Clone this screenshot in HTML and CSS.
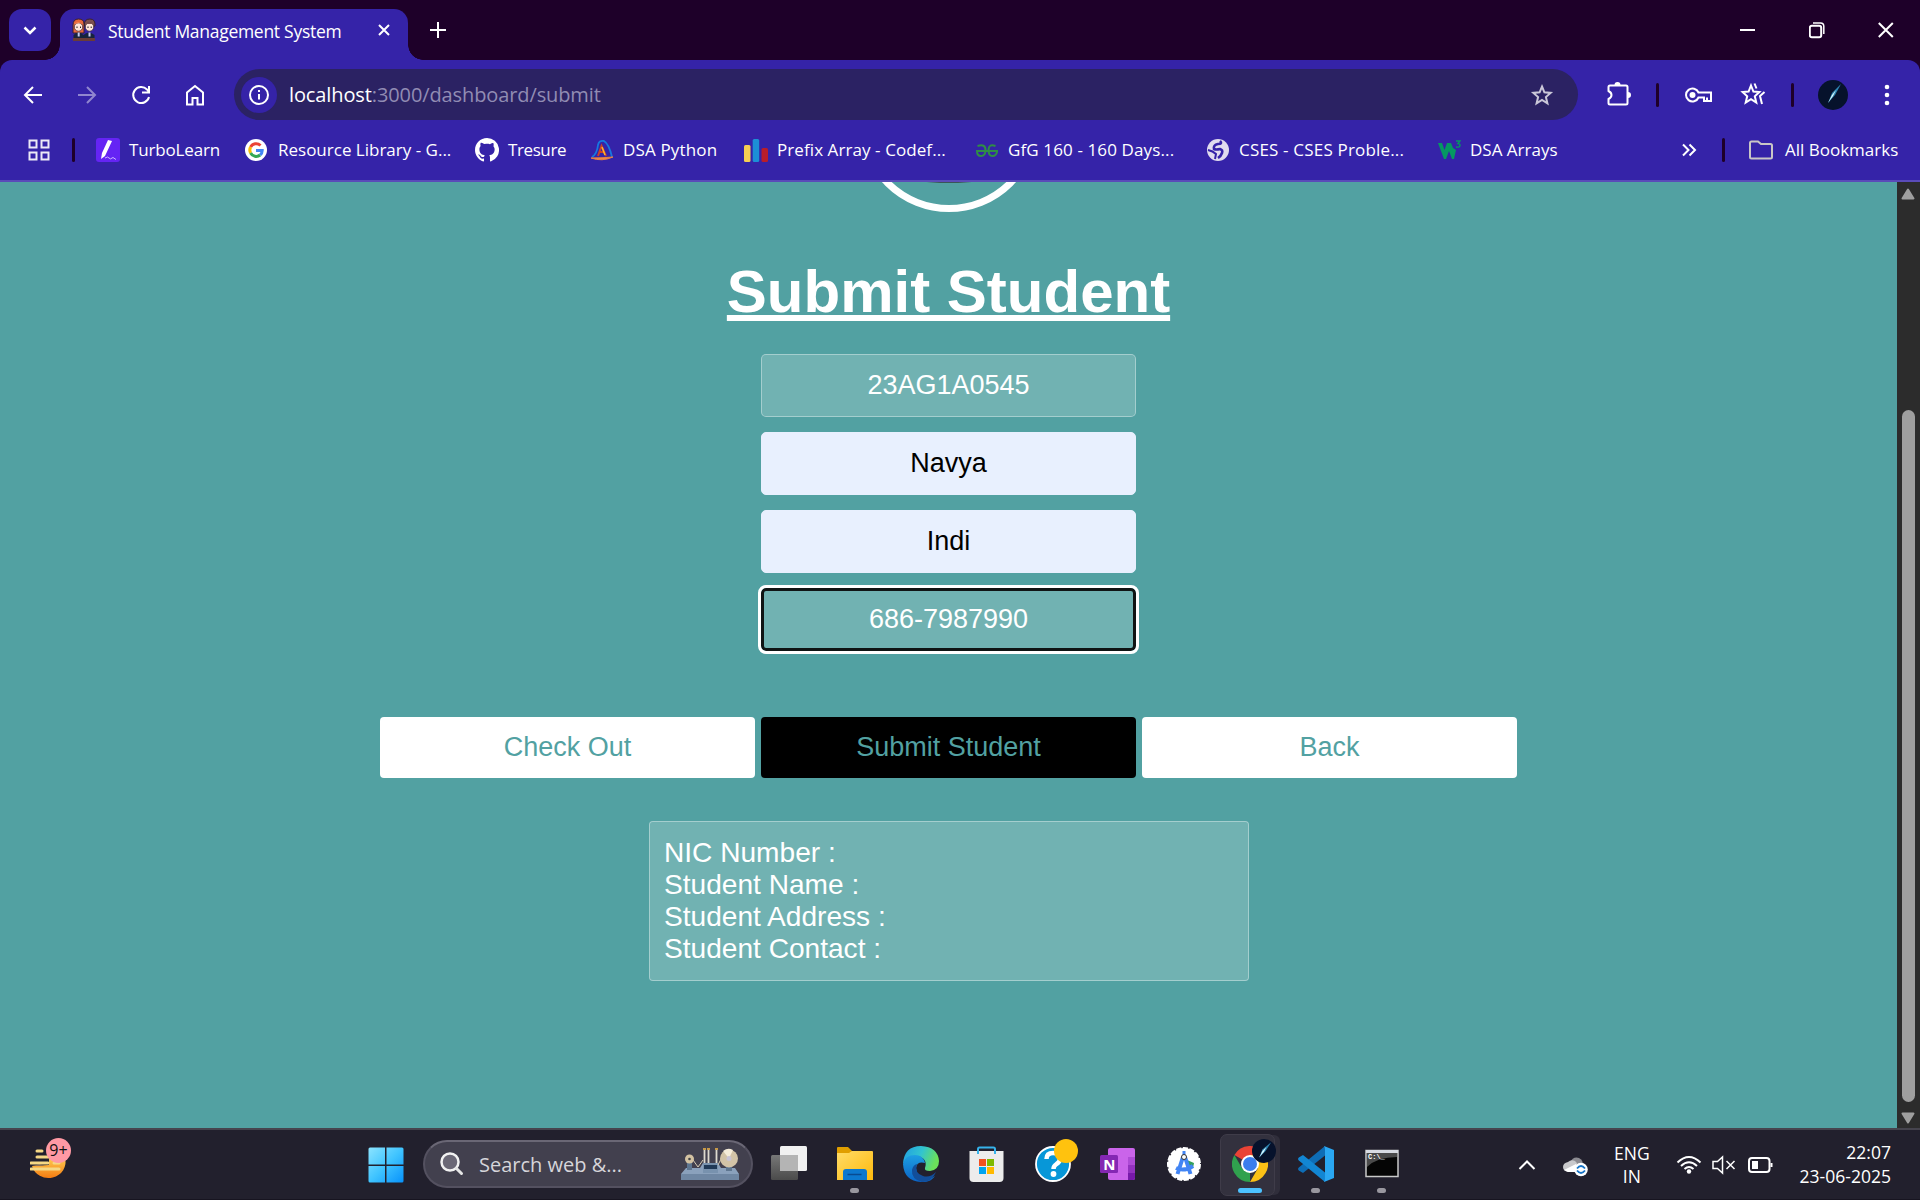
FILE: index.html
```html
<!DOCTYPE html>
<html lang="en">
<head>
<meta charset="utf-8">
<title>Student Management System</title>
<link rel="stylesheet" href="styles.css">
</head>
<body>
<header class="browser">
  <div class="tabstrip">
    <div class="tab-search"><svg width="42" height="42" viewBox="0 0 42 42"><path d="M15.500 18.500l5.500 5.500 5.500-5.500" class="ln w25"/></svg></div>
    <div class="tab">
      <svg class="favicon" width="24" height="24" viewBox="0 0 24 24"><path d="M1 15V7q0-6 5.500-6T12 6v9z" fill="#e7683c" stroke="#3a2230"/><path d="M12.500 8q-1-7 5.500-7 5.500 0 5 7z" fill="#7d5050" stroke="#3a2230"/><circle cx="6.500" cy="9" r="4.200" fill="#ffe6da" stroke="#3a2230" stroke-width=".7"/><circle cx="17.500" cy="9" r="4.200" fill="#ffe6da" stroke="#3a2230" stroke-width=".7"/><path d="M2.500 6q3-4 8 0l-3-1z" fill="#ff8650"/><path d="M13 6q3-3 9 0z" fill="#7d5050"/><path d="M1.500 20v-3q5-5 10 0 5-5 11 0v3z" fill="#17243c"/><path d="M5.700 14.500h2v4h-2zM16.500 14.500h2v4h-2z" fill="#c8cdf2"/><path d="M1 20h22v3H1z" fill="#6a3c37"/><path d="M5 8.500V10M8.500 8.500V10M16 8.500V10M19.200 8.500V10" stroke="#222"/></svg>
      <span class="tab-title">Student Management System</span>
      <svg class="tab-close" width="14" height="14" viewBox="0 0 14 14"><path d="M2 2l10 10M12 2L2 12" class="ln w2"/></svg>
    </div>
    <svg class="new-tab" width="20" height="20" viewBox="0 0 20 20"><path d="M10 2v16M2 10h16" class="ln w2"/></svg>
    <div class="window-controls">
      <svg width="16" height="18" viewBox="0 0 16 18"><path d="M0 9h15" class="ln w2"/></svg>
      <svg width="16" height="18" viewBox="0 0 16 18"><rect x=".8" y="4.800" width="11.400" height="11.400" rx="2" class="ln w2"/><path d="M4 2h7.500q3.300 0 3.300 3.300V13" class="ln w15"/></svg>
      <svg width="16" height="18" viewBox="0 0 16 18"><path d="M.8 2l14 14M14.800 2l-14 14" class="ln w2"/></svg>
    </div>
  </div>
  <div class="toolbar">
    <div class="nav">
      <svg width="24" height="24" viewBox="0 0 24 24"><path d="M21 12H4M12 4l-8 8 8 8" class="ln w2"/></svg>
      <svg class="dim" width="24" height="24" viewBox="0 0 24 24"><path d="M3 12h17M12 4l8 8-8 8" class="ln w2"/></svg>
      <svg width="24" height="24" viewBox="0 0 24 24"><path d="M20 14a8 8 0 1 1-2-7.500L20 9M20 3v6.500h-7" class="ln w2"/></svg>
      <svg width="24" height="24" viewBox="0 0 24 24"><path d="M4 21.500V9.500L12 3l8 6.500v12h-5.500V15h-5v6.500z" class="ln w2"/></svg>
    </div>
    <div class="omnibox">
      <span class="info"><svg width="22" height="22" viewBox="0 0 22 22"><circle cx="11" cy="11" r="9" class="ln w2"/><path d="M11 10v5.500M11 6v2" class="ln w2"/></svg></span>
      <span class="url">localhost<i>:3000/dashboard/submit</i></span>
      <svg class="star" width="24" height="24" viewBox="0 0 24 24"><path d="M12 3.500l2.400 5.800 6.300.6-4.800 4.200 1.500 6.200-5.400-3.300-5.400 3.300 1.500-6.200-4.800-4.200 6.300-.6z" class="ln w2"/></svg>
    </div>
    <div class="actions">
      <svg class="a-ext" width="26" height="26" viewBox="0 0 26 26"><path d="M2.500 6q0-1.500 1.500-1.500h16q1.500 0 1.500 1.500v16q0 1.500-1.500 1.500H4q-1.500 0-1.500-1.500V18q3-1.500 3-4t-3-4z" class="ln w2"/><path d="M8.500 4a3 3 0 0 1 6 0zM22 11a3 3 0 0 1 0 6z" fill="#fff"/></svg>
      <b class="sep a-sep1"></b>
      <svg class="a-key" width="28" height="20" viewBox="0 0 28 20"><path d="M13.500 7.500a6.500 6.500 0 1 0 0 5H19V16h7V7.500zM22 16v-3.500" class="ln w2"/><circle cx="7.500" cy="10" r="3" fill="#fff"/></svg>
      <svg class="a-stars" width="28" height="28" viewBox="0 0 28 28"><path d="M12 4.500l2.400 6 6 .6-4.600 4.200 1.500 6.300-5.300-3.400-5.300 3.400 1.500-6.300-4.600-4.200 6-.6zM15.500 2.500l2 5M25.500 11l-4.500 4 2 8" class="ln w2"/></svg>
      <b class="sep a-sep2"></b>
      <svg class="a-avatar" width="30" height="30" viewBox="0 0 30 30"><circle cx="15" cy="15" r="15" fill="#06122c"/><path d="M10 23L14 13 23 4 17 15z" fill="#2e86b4"/><path d="M10 23l4-8 4-5-3 6z" fill="#e6ffff"/></svg>
      <svg class="a-menu" width="6" height="24" viewBox="0 0 6 24"><g fill="#fff"><circle cx="3" cy="4" r="2.300"/><circle cx="3" cy="12" r="2.300"/><circle cx="3" cy="20" r="2.300"/></g></svg>
    </div>
  </div>
  <div class="bookmarks">
    <svg class="apps" width="24" height="24" viewBox="0 0 24 24"><path d="M2.500 2.500h7v7h-7zM14.500 2.500h7v7h-7zM2.500 14.500h7v7h-7zM14.500 14.500h7v7h-7z" class="ln w2"/></svg>
    <b class="sep b-sep1"></b>
    <div class="bm bm1"><svg width="24" height="24" viewBox="0 0 24 24"><rect width="24" height="24" rx="3" fill="#6524f4"/><path d="M12 2l4 1-7 15-4 3 1-6z" fill="#fff"/><path d="M9 20q3-2 4 0t4-.5l3 2" fill="none" stroke="#c9b4ff"/></svg><span>TurboLearn</span></div>
    <div class="bm bm2"><svg width="24" height="24" viewBox="0 0 24 24"><circle cx="12" cy="12" r="11" fill="#fff"/><g fill="none" stroke-width="3"><path d="M16.500 7.500A6.300 6.300 0 0 0 6.600 9" stroke="#ea4335"/><path d="M6.600 9a6.300 6.300 0 0 0 0 6" stroke="#fbbc05"/><path d="M6.600 15a6.300 6.300 0 0 0 9.600 2" stroke="#34a853"/><path d="M16.200 17a6.300 6.300 0 0 0 2-4.500H12" stroke="#4285f4"/></g></svg><span>Resource Library - G...</span></div>
    <div class="bm bm3"><svg width="24" height="24" viewBox="0 0 16 16"><path fill="#fff" d="M8 0C3.580 0 0 3.580 0 8c0 3.540 2.290 6.530 5.470 7.590.4.070.55-.17.55-.38v-1.490c-2.230.48-2.690-1.070-2.690-1.070-.36-.92-.89-1.170-.89-1.170-.73-.5.050-.49.050-.49.810.06 1.230.83 1.230.83.720 1.230 1.880.87 2.340.67.070-.52.280-.87.510-1.070-1.780-.2-3.640-.89-3.640-3.950 0-.87.310-1.590.82-2.150-.08-.2-.36-1.020.08-2.120 0 0 .67-.21 2.200.82A7.600 7.600 0 0 1 8 3.860c.68 0 1.360.09 2 .27 1.530-1.040 2.200-.82 2.200-.82.440 1.100.16 1.920.08 2.120.51.560.82 1.270.82 2.150 0 3.070-1.870 3.750-3.650 3.950.29.250.54.730.54 1.480v2.200c0 .21.150.46.550.38A8 8 0 0 0 8 0z"/></svg><span>Tresure</span></div>
    <div class="bm bm4"><svg width="24" height="24" viewBox="0 0 24 24"><path d="M2 19Q7 16 8 7q1-5 6-4 5 3 8 16" fill="none" stroke="#1678e0" stroke-width="1.800"/><path d="M1 20q11 4 22-1-11 1-22 1z" fill="#f48b42" stroke="#e68145"/><path d="M8 18l3.500-10L16 18M10 14h4" fill="none" stroke="#c8422a" stroke-width="2"/><path d="M12 9l3 8" stroke="#ffb42e" stroke-width="1.500"/></svg><span>DSA Python</span></div>
    <div class="bm bm5"><svg width="24" height="24" viewBox="0 0 24 24"><rect y="7" width="6.500" height="17" rx="1.500" fill="#f6ce52"/><rect x="8.700" y="1" width="6.500" height="23" rx="1.500" fill="#1c8fd6"/><rect x="17.500" y="10" width="6.500" height="14" rx="1.500" fill="#b91d2a"/></svg><span>Prefix Array - Codef...</span></div>
    <div class="bm bm6"><svg width="24" height="24" viewBox="0 0 24 24"><g fill="none" stroke="#2f8d46" stroke-width="2"><path d="M2.500 8q8-2.500 8 4 0 6-4.500 6-4 0-4-5H22v1q-1 4-4.500 4-4 0-4-6 0-6.500 7-4"/></g></svg><span>GfG 160 - 160 Days...</span></div>
    <div class="bm bm7"><svg width="24" height="24" viewBox="0 0 24 24"><circle cx="12" cy="12" r="11" fill="#e0dcee"/><path d="M14 3q3 3-2 3-5 1-4 5 2 1 6 0 3 1 2 4-1 3-4 5" fill="none" stroke="#3523a8" stroke-width="2.600"/><path d="M2 12q5 1 8 4l-1 5" fill="none" stroke="#3523a8" stroke-width="2"/></svg><span>CSES - CSES Proble...</span></div>
    <div class="bm bm8"><svg width="24" height="24" viewBox="0 0 24 24"><path d="M1 5h4l2.500 7L10 5h4l2 5 3 2-2 9h-2l-3-8-3 8H7z" fill="#059862"/><path d="M19 3h4l-2 2.500q2 0 2 2t-4 1.500" fill="none" stroke="#059862" stroke-width="1.400"/></svg><span>DSA Arrays</span></div>
    <svg class="more" width="16" height="14" viewBox="0 0 16 14"><path d="M2 1.500L7.500 7 2 12.500M8.500 1.500L14 7l-5.500 5.500" class="ln w2"/></svg>
    <b class="sep b-sep2"></b>
    <div class="bm bm9"><svg width="24" height="24" viewBox="0 0 24 24"><path d="M1 19V5q0-1.500 1.500-1.500H9L12 6h9.500Q23 6 23 7.500V19q0 1.500-1.500 1.500h-19Q1 20.500 1 19z" fill="none" stroke="#c9c6c6" stroke-width="2"/></svg><span>All Bookmarks</span></div>
  </div>
</header>

<main class="viewport">
  <section class="page">
    <div class="logo"></div>
    <h1>Submit Student</h1>
    <form class="fields">
      <input value="23AG1A0545">
      <input class="autofilled" value="Navya">
      <input class="autofilled" value="Indi">
      <input class="focused" value="686-7987990">
    </form>
    <div class="buttons">
      <button>Check Out</button>
      <button class="active">Submit Student</button>
      <button>Back</button>
    </div>
    <div class="result">
      <div>NIC Number :</div>
      <div>Student Name :</div>
      <div>Student Address :</div>
      <div>Student Contact :</div>
    </div>
  </section>
  <aside class="scrollbar">
    <svg width="14" height="12" viewBox="0 0 14 12"><path d="M7 1.500L12.500 10.500h-11z" class="tri"/></svg>
    <i class="thumb"></i>
    <svg width="14" height="12" viewBox="0 0 14 12"><path d="M7 10.500L12.500 1.500h-11z" class="tri"/></svg>
  </aside>
</main>

<footer class="taskbar">
  <div class="weather">
    <svg width="36" height="36" viewBox="0 0 36 36"><defs><linearGradient id="sun" x2="0" y2="1"><stop offset="0" stop-color="#ffd75a"/><stop offset="1" stop-color="#f57c12"/></linearGradient></defs><path d="M2 20a17 16 0 0 0 33-8l-1-3-15 4v6z" fill="url(#sun)"/><path d="M2 20q9-3 12 0z" fill="#8c6f55"/><path d="M7 5h5M7 11h20M1 17h17M24 17h5M1 23h28" stroke="#f5d885" stroke-width="3" stroke-linecap="round"/></svg>
    <span class="count">9+</span>
  </div>
  <svg class="start" width="36" height="36" viewBox="0 0 36 36"><defs><linearGradient id="win" x2="1" y2="1"><stop offset="0" stop-color="#8ce4ff"/><stop offset=".5" stop-color="#40c4ff"/><stop offset="1" stop-color="#0792fb"/></linearGradient></defs><path d="M2 .5h15v17H.5V2Q.5.500 2 .5zM18.500.5H34q1.500 0 1.500 1.500v15.500h-17zM.5 19H17v16.500H2Q.5 35.500.5 34zM18.500 19h17v15q0 1.500-1.500 1.500H18.500z" fill="url(#win)"/></svg>
  <div class="search">
    <svg class="lens" width="24" height="24" viewBox="0 0 24 24"><circle cx="10" cy="10" r="8.500" fill="#6b6876" stroke="#f2f2f2" stroke-width="2.500"/><path d="M16.500 16.500l5 5" stroke="#e6e6e6" stroke-width="3" stroke-linecap="round"/></svg>
    <span>Search web &amp;...</span>
    <svg class="art" width="60" height="32" viewBox="0 0 60 32"><path d="M6 20h14l3-5h15l3 5h14l4 6v6H1v-6z" fill="#8aa1bc"/><path d="M1 26h58v6H1z" fill="#6f87a3"/><path d="M23 15h15v10H23z" fill="#7892ae"/><path d="M24 17h13v4H24z" fill="#1f3957"/><path d="M7 12h5v10H7zM46 16h6v7h-6z" fill="#5e7690"/><path d="M13 12l5 7 5-7M38 17l4-8" fill="none" stroke="#d6ccb4"/><circle cx="9.500" cy="11" r="4.500" fill="#d3c2a2"/><circle cx="9.500" cy="11" r="1.300" fill="#444"/><circle cx="49" cy="10.500" r="9" fill="#d2c3a7"/><path d="M49 10.500L43 3q5-4 10-1z" fill="#f5ecd9"/><circle cx="49" cy="10.500" r="2.500" fill="#c9c4d5"/><path d="M24.500 1v14M28.500 1v14M36.500 1v14" stroke="#ddd9cf" stroke-width="1.800"/><path d="M23 1h3M27 1h3M35 1h3" stroke="#c79a4a" stroke-width="2"/></svg>
  </div>
  <div class="apps-row">
    <div class="app"><svg width="36" height="36" viewBox="0 0 36 36"><defs><linearGradient id="tv" x2="0" y2="1"><stop offset="0" stop-color="#777"/><stop offset="1" stop-color="#4b4b4b"/></linearGradient></defs><rect y="9" width="27" height="25" rx="1.500" fill="url(#tv)"/><rect x="9" y="0" width="27" height="25" rx="1.500" fill="#f1f1f1"/><path d="M9 9h18v16H9z" fill="#b4b4b4"/></svg></div>
    <div class="app running"><svg width="36" height="36" viewBox="0 0 36 36"><defs><linearGradient id="fold" x2="1" y2="1"><stop offset="0" stop-color="#ffdc68"/><stop offset="1" stop-color="#ffb90c"/></linearGradient></defs><path d="M0 2q0-1 1-1h10l4 4v6H0z" fill="#e09e00"/><path d="M0 7h12l3-2h20q1 0 1 1v28H0z" fill="url(#fold)"/><path d="M6 34V26q0-3 3-3h18q3 0 3 3v8z" fill="#0c78cf"/><path d="M10.500 28.500h14" stroke="#084b91" stroke-width="1.500"/></svg></div>
    <div class="app"><svg width="36" height="36" viewBox="0 0 36 36"><defs><linearGradient id="ed1" x2="1" y2=".3"><stop offset="0" stop-color="#1f9de4"/><stop offset=".55" stop-color="#32c4cf"/><stop offset="1" stop-color="#6be05a"/></linearGradient><linearGradient id="ed2" x2="0" y2="1"><stop offset="0" stop-color="#1e9fe3"/><stop offset="1" stop-color="#0a62c4"/></linearGradient></defs><path d="M0 18Q1 0 18 0q17 1 18 15 0 9-9 10-6 0-5-3 3-9-7-12Q5 9 0 18z" fill="url(#ed1)"/><path d="M0 18q2-9 12-9 8 0 10 8-8-2-9 5 0 8 10 10 5 1 9-2-5 7-14 6Q1 35 0 18z" fill="url(#ed2)"/><path d="M14 18q-3 9 6 12 7 2 13-4-4 10-14 10Q8 33 9 24q1-5 5-6z" fill="#124e9a"/></svg></div>
    <div class="app"><svg width="36" height="36" viewBox="0 0 36 36"><path d="M.5 5h34v27q0 4-4 4h-26q-4 0-4-4z" fill="#ececec"/><path d="M9 8V3q0-1.500 1.500-1.500h14Q26 1.500 26 3v5" fill="none" stroke="#36b2ea" stroke-width="2"/><path d="M10 13h7v7h-7z" fill="#f25022"/><path d="M18 13h7v7h-7z" fill="#7fba00"/><path d="M10 21h7v7h-7z" fill="#00a4ef"/><path d="M18 21h7v7h-7z" fill="#ffb900"/></svg></div>
    <div class="app"><svg width="36" height="36" viewBox="0 0 36 36"><circle cx="18" cy="18" r="17" fill="#0797d8" stroke="#fff" stroke-width="1.800"/><path d="M11.500 13q0-6 6.500-6 7 0 7 5.500 0 3.500-3.500 5.500-3 2-3 5" fill="none" stroke="#fff" stroke-width="4.500"/><circle cx="18.500" cy="28" r="2.900" fill="#fff"/></svg><i class="notice"></i></div>
    <div class="app"><svg width="36" height="36" viewBox="0 0 36 36"><rect x="8" y="2" width="27" height="32" rx="2" fill="#ca64ea"/><path d="M28 11h7v8h-7z" fill="#ae4bd5"/><path d="M28 19h7v8h-7z" fill="#9332bf"/><path d="M28 27h7v5q0 2-2 2h-5z" fill="#7719aa"/><rect y="9" width="18" height="18" rx="1.500" fill="#8427b3"/></svg><b class="letter">N</b></div>
    <div class="app"><svg width="36" height="36" viewBox="0 0 36 36"><circle cx="18" cy="18" r="16" fill="#fff" stroke="#fff" stroke-width="2" stroke-dasharray="5.200 1.500"/><path d="M21 14l7 3-1 5-4-1z" fill="#34a05a"/><path d="M17 11L11.500 28M19 11l5.500 17M10 22q8 4 17-2" fill="none" stroke="#4285f4" stroke-width="4"/><path d="M18 5v6" stroke="#4285f4" stroke-width="3"/><circle cx="18" cy="11" r="2.500" fill="#fff" stroke="#333"/></svg></div>
    <div class="app current"><svg width="36" height="36" viewBox="0 0 36 36"><path d="M18 18L2.400 9A18 18 0 0 1 33.600 9z" fill="#ea4335"/><path d="M18 18L18 36A18 18 0 0 1 2.400 9L10.200 22.500z" fill="#30a14e"/><path d="M18 9h15.600A18 18 0 0 1 18 36l7.800-13.500z" fill="#fbc116"/><circle cx="18" cy="18" r="9" fill="#fff"/><circle cx="18" cy="18" r="7" fill="#3b7ded"/></svg><svg class="profile" width="24" height="24" viewBox="0 0 30 30"><circle cx="15" cy="15" r="15" fill="#06122c"/><path d="M9 23L13 13 24 4 17 15z" fill="#2e86b4"/><path d="M9 23l4-8 5-5-3 6z" fill="#d6f6ff"/></svg></div>
    <div class="app running"><svg width="36" height="36" viewBox="0 0 36 36"><path d="M27 0v9.500L5 27 .8 24.500q-1.500-1.500 0-3z" fill="#0e6db6"/><path d="M27 36v-9.500L5 9 .8 11.500q-1.500 1.500 0 3z" fill="#1286d3"/><path d="M26 0l10 4v28l-10 4q1-1 1-3V3q0-2-1-3z" fill="#2aa7f2"/></svg></div>
    <div class="app running"><svg width="36" height="36" viewBox="0 0 36 36"><rect x="2" y="4.500" width="32" height="26" fill="#050505" stroke="#c9c9c9" stroke-width="1.500"/><path d="M2 4h32v3H2z" fill="#d8dbe2"/><path d="M3 7h30v4Q13 11 3 21z" fill="#4a4a4a"/></svg><b class="prompt">C:\_</b></div>
  </div>
  <div class="tray">
    <svg class="t-up" width="18" height="12" viewBox="0 0 18 12"><path d="M1.500 10L9 2.500 16.500 10" class="ln w2"/></svg>
    <svg class="t-cloud" width="26" height="22" viewBox="0 0 26 22"><path d="M7 8q3-7 9-5 4 2 4 7l-8 4z" fill="#8c8b91"/><path d="M5 17q-5-1-5-5t5-5q3-3 7-1 4 3 3 11z" fill="#c9c9cc"/><path d="M1 15l12-6v8H5z" fill="#fff"/><circle cx="18" cy="14.500" r="6.800" fill="#fff"/><path d="M14 13.500q4-5 8 0M22 15.500q-4 5-8 0" fill="none" stroke="#1673c6" stroke-width="1.800"/></svg>
    <div class="lang">ENG<br>IN</div>
    <svg class="t-wifi" width="26" height="20" viewBox="0 0 26 20"><path d="M1.500 7.500Q13-3.500 24.500 7.500M5 11Q13 3.500 21 11M8.500 14Q13 10 17.500 14" class="ln w2"/><circle cx="13" cy="16.500" r="2.200" fill="#fff"/></svg>
    <svg class="t-vol" width="24" height="20" viewBox="0 0 24 20"><path d="M1 6.500h4.500L10.500 2v16l-5-4.500H1zM14.500 6l8 8M22.500 6l-8 8" class="ln w15"/></svg>
    <svg class="t-bat" width="26" height="18" viewBox="0 0 26 18"><rect x="1" y="2" width="20.500" height="14" rx="3" class="ln w2"/><rect x="4" y="5" width="6" height="8" fill="#fff"/><path d="M23.500 7v4" class="ln w2"/></svg>
    <div class="clock">22:07<br>23-06-2025</div>
  </div>
</footer>
</body>
</html>
```
FILE: styles.css
```css
* { box-sizing: border-box; }
body { margin: 0; width: 1920px; height: 1200px; overflow: hidden; display: flex; flex-direction: column; font-family: "Open Sans", sans-serif; color: #fff; }
svg { display: block; flex: none; }
.ln { fill: none; stroke: #fff; }
.w15 { stroke-width: 1.5; }
.w2 { stroke-width: 2; }
.w25 { stroke-width: 2.5; }

/* Browser frame */
.browser { height: 182px; flex: none; background: #1e0029; }
.tabstrip { height: 60px; display: flex; align-items: flex-start; padding: 9px 26px 0 9px; }
.tab-search { width: 42px; height: 42px; border-radius: 13px; background: #3523a8; margin-right: 9px; }
.tab { position: relative; width: 348px; height: 51px; padding: 0 17px 9px 12px; display: flex; align-items: center; border-radius: 14px 14px 0 0; background: #3523a8; }
.tab::before, .tab::after { content: ""; position: absolute; bottom: 0; width: 15px; height: 15px; }
.tab::before { right: 100%; background: radial-gradient(circle at 0 0, transparent 14.500px, #3523a8 15px); }
.tab::after { left: 100%; background: radial-gradient(circle at 100% 0, transparent 14.500px, #3523a8 15px); }
.tab-title { margin: 2px auto 0 12px; font-size: 17.500px; letter-spacing: -.28px; white-space: nowrap; }
.new-tab { margin: 11px auto 0 20px; }
.window-controls { display: flex; gap: 53px; padding-top: 12px; }
.toolbar { height: 69px; display: flex; align-items: center; background: #3523a8; border-radius: 12px 12px 0 0; padding-left: 21px; }
.nav { display: flex; gap: 30px; width: 213px; }
.dim { opacity: .45; }
.omnibox { width: 1344px; height: 51px; border-radius: 26px; background: #2b2263; display: flex; align-items: center; padding: 0 24px 0 7px; }
.info { width: 36px; height: 36px; border-radius: 50%; background: #3523a8; display: grid; place-items: center; }
.url { margin: 0 auto 0 12px; font-size: 20px; letter-spacing: -.11px; }
.url i { font-style: normal; color: #918cb3; }
.star { opacity: .75; }
.actions { display: flex; align-items: center; }
.a-ext { margin-left: 28px; margin-top: -2px; }
.sep { width: 3px; height: 24px; border-radius: 2px; background: #1e0029; flex: none; }
.a-sep1 { margin-left: 24px; }
.a-key { margin-left: 26px; }
.a-stars { margin-left: 26px; }
.a-sep2 { margin-left: 24px; }
.a-avatar { margin-left: 24px; }
.a-menu { margin-left: 36px; }
.bookmarks { height: 53px; background: #3523a8; border-bottom: 2px solid #5a4bb9; display: flex; align-items: center; padding: 0 0 9px 27px; }
.apps { opacity: .9; }
.b-sep1 { margin: 0 21px 0 21px; }
.bm { display: flex; align-items: center; gap: 9px; white-space: nowrap; font-size: 17px; line-height: 24px; flex: none; }
.bm span { margin-top: -1px; }
.bm1 { width: 148px; letter-spacing: -.15px; }
.bm2 { width: 231px; gap: 10px; }
.bm3 { width: 115px; letter-spacing: -.4px; }
.bm4 { width: 154px; letter-spacing: .15px; }
.bm5 { width: 231px; letter-spacing: .08px; }
.bm6 { width: 231px; letter-spacing: .12px; }
.bm7 { width: 231px; letter-spacing: .18px; }
.bm8 { width: 244px; }
.more { margin-right: 25px; }
.b-sep2 { margin-right: 24px; }
.bm9 { gap: 12px; }

/* Student form */
.viewport { height: 946px; display: flex; flex: none; }
.page { width: 1897px; background: #52a1a2; display: flex; flex-direction: column; align-items: center; font-family: "Liberation Sans", Arial, sans-serif; overflow: hidden; }
.logo { width: 180px; height: 180px; margin-top: -150px; flex: none; border: 7px solid #fff; border-radius: 50%; background: radial-gradient(ellipse 24px 1.500px at 50% 143px, #3a5557 0 50%, transparent); }
h1 { margin: 45px 0 28px; font-size: 60px; line-height: 69px; text-decoration: underline; text-decoration-thickness: 6px; text-underline-offset: 3px; text-decoration-skip-ink: none; }
.fields { display: flex; flex-direction: column; gap: 15px; margin: 0 0 66px; }
.fields input { width: 375px; height: 63px; padding: 0 0 1px; border: 1px solid rgba(255,255,255,.48); border-radius: 5px; background: rgba(255,255,255,.18); background-clip: padding-box; color: #fff; font: 27px/31px "Liberation Sans", Arial, sans-serif; text-align: center; outline: none; }
.fields .autofilled { background: #e8f0fe; border-color: #e8f0fe; color: #000; }
.fields .focused { border: 3px solid #101414; outline: 3px solid #fff; outline-offset: -.5px; }
.buttons { display: flex; gap: 6px; margin-bottom: 43px; }
.buttons button { width: 375px; height: 61px; padding: 0 0 1px; border: 0; border-radius: 4px; background: #fff; color: #52a1a2; font: 27px "Liberation Sans", Arial, sans-serif; }
.buttons .active { background: #000; }
.result { width: 600px; height: 160px; padding: 15px 14.500px; border: 1px solid rgba(255,255,255,.48); border-radius: 4px; background: rgba(255,255,255,.18); background-clip: padding-box; font-size: 28.100px; line-height: 32px; }
.scrollbar { width: 23px; background: #2c2c2c; display: flex; flex-direction: column; align-items: center; padding: 6px 1px 4px 0; }
.thumb { width: 13px; height: 692px; border-radius: 7px; background: #9f9f9f; margin: auto 0 10px; }
.tri { fill: #9f9f9f; stroke: #9f9f9f; stroke-width: 2; stroke-linejoin: round; }

/* Taskbar */
.taskbar { height: 72px; flex: none; background: #22202d; border-top: 2px solid #46444e; border-bottom: 1px solid #171420; display: flex; align-items: flex-start; padding-left: 30px; }
.weather { position: relative; width: 337.500px; padding-top: 19px; height: 69px; }
.weather svg { margin-top: -3px; }
.count { position: absolute; left: 16px; top: 8px; width: 25px; height: 25px; border-radius: 50%; background: #ff99a4; color: #111; font-size: 16px; line-height: 24px; text-align: center; }
.start { margin-top: 17px; }
.search { width: 330px; height: 48px; margin: 10px 0 0 19.500px; border: 2px solid #545160; border-top-color: #6a6775; border-radius: 24px; background: #42404e; display: flex; align-items: center; padding: 0 11px 0 15px; font-size: 20px; color: #d6d5da; }
.search span { margin: 1px auto 0 15px; }
.apps-row { display: flex; margin-left: 3px; }
.app { position: relative; width: 65.900px; height: 66px; padding: 16px 15px 0; }
.running::after, .current::after { content: ""; position: absolute; left: 28px; top: 58px; width: 9px; height: 5px; border-radius: 3px; background: #99979f; }
.current::before { content: ""; position: absolute; left: 3px; top: 4px; width: 53px; height: 60px; border: 1px solid #3f3c49; border-radius: 7px; background: #33313e; box-shadow: 6px 0 0 -1px #302e3b; }
.current svg { position: relative; }
.current::after { left: 21px; width: 24px; background: #4cc2ff; }
.current .profile { position: absolute; left: 35px; top: 9px; }
.notice { position: absolute; left: 34px; top: 9px; width: 24px; height: 24px; border-radius: 50%; background: #ffc20e; }
.letter { position: absolute; left: 15px; top: 25px; width: 18px; font-size: 15px; line-height: 18px; text-align: center; }
.prompt { position: absolute; left: 19px; top: 23px; font: bold 7px/9px "Liberation Mono", monospace; }
.tray { display: flex; align-items: center; height: 69px; margin-left: 103px; }
.t-cloud { margin: 3px 0 0 27px; }
.lang { width: 60px; margin: 1px 0 0 13px; font-size: 17.500px; line-height: 23px; text-align: center; }
.t-wifi { margin-left: 14px; }
.t-vol { margin-left: 10px; }
.t-bat { margin-left: 12px; }
.clock { width: 117px; font-size: 17.500px; line-height: 24px; text-align: right; margin-top: -1px; }
```
